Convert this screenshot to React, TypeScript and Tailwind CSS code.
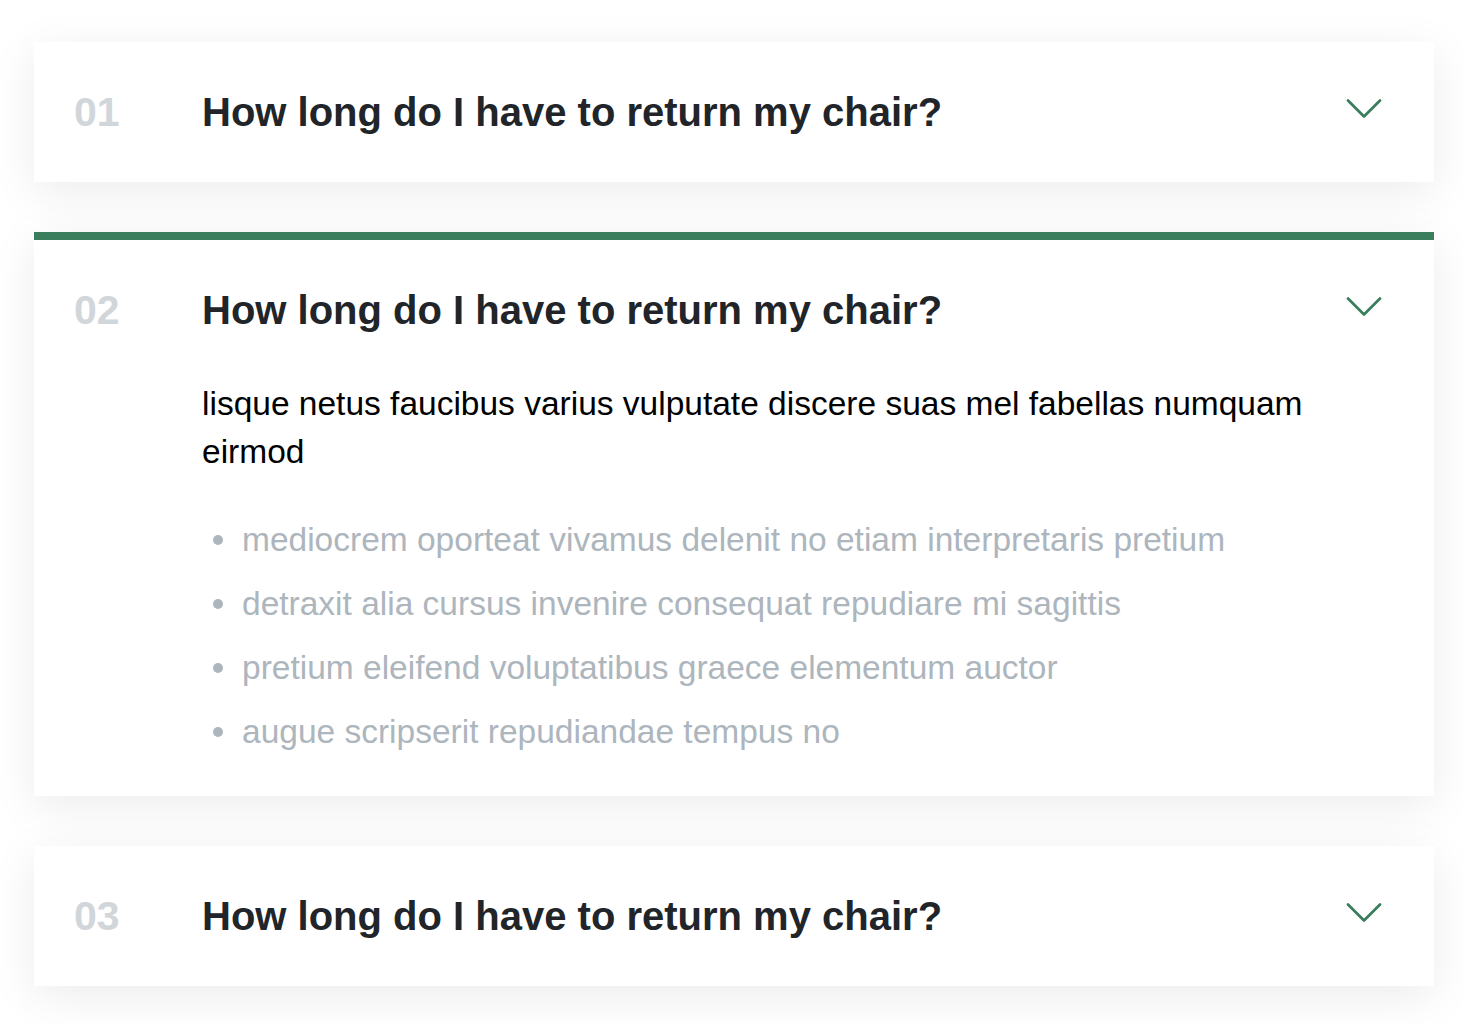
import { useState } from 'react';

type Faq = {
  id: string;
  question: string;
  answer?: string;
  points?: string[];
};

const faqs: Faq[] = [
  { id: '01', question: 'How long do I have to return my chair?' },
  {
    id: '02',
    question: 'How long do I have to return my chair?',
    answer: 'lisque netus faucibus varius vulputate discere suas mel fabellas numquam eirmod',
    points: [
      'mediocrem oporteat vivamus delenit no etiam interpretaris pretium',
      'detraxit alia cursus invenire consequat repudiare mi sagittis',
      'pretium eleifend voluptatibus graece elementum auctor',
      'augue scripserit repudiandae tempus no',
    ],
  },
  { id: '03', question: 'How long do I have to return my chair?' },
];

function Chevron() {
  return (
    <svg width="36" height="21" viewBox="0 0 36 21" fill="none" className="shrink-0 mb-[7px]">
      <path d="M2 2.5 L18 18.5 L34 2.5" stroke="#3a7e5e" strokeWidth="2.8" strokeLinecap="round" strokeLinejoin="round" />
    </svg>
  );
}

export default function App() {
  const [openId, setOpenId] = useState<string>('02');

  return (
    <div className="min-h-screen bg-white pl-[34px] pr-[30px] pt-[42px] pb-[38px] font-['Liberation_Sans',Arial,sans-serif]">
      <div className="flex flex-col gap-[50px]">
        {faqs.map((faq) => {
          const isOpen = openId === faq.id;
          return (
            <div
              key={faq.id}
              className={`bg-white shadow-[0_10px_44px_rgba(0,0,0,0.08)] ${
                isOpen ? 'border-t-8 border-[#3a7e5e]' : ''
              }`}
            >
              {/* Header */}
              <button
                onClick={() => setOpenId(isOpen ? '' : faq.id)}
                className="w-full flex items-center pl-10 pr-[52px] py-[46px] text-left"
              >
                <span className="w-[48px] text-[41px] leading-[48px] font-semibold text-[#d1d6db] mr-[80px]">
                  {faq.id}
                </span>
                <span className="flex-1 text-[40px] leading-[48px] font-bold text-[#212529]">
                  {faq.question}
                </span>
                <Chevron />
              </button>

              {/* Body */}
              {isOpen && (
                <div className="pl-[168px] pr-10 pb-8">
                  <p className="text-[33.5px] leading-[48px] text-black">{faq.answer}</p>
                  <ul className="mt-8">
                    {faq.points?.map((point) => (
                      <li key={point} className="flex items-center text-[33.5px] leading-[64px] text-[#adb5bd]">
                        <span className="w-[10px] h-[10px] rounded-full bg-[#adb5bd] ml-[11px] mr-[19px]" />
                        {point}
                      </li>
                    ))}
                  </ul>
                </div>
              )}
            </div>
          );
        })}
      </div>
    </div>
  );
}
